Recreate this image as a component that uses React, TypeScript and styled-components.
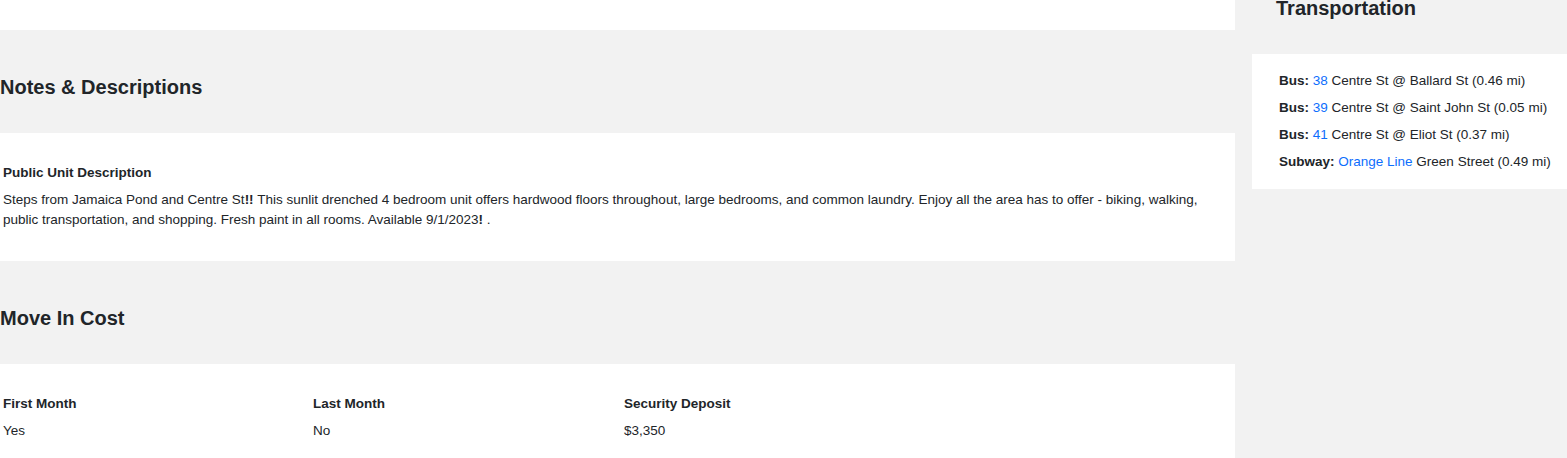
import React from "react";
import styled, { createGlobalStyle } from "styled-components";

const GlobalStyle = createGlobalStyle`
  html, body {
    margin: 0;
    padding: 0;
    background: #f2f2f2;
    overflow: hidden;
  }
  body {
    font-family: "Liberation Sans", Arial, sans-serif;
    color: #212529;
  }
  * { box-sizing: border-box; }
`;

const Page = styled.div`
  display: flex;
  align-items: flex-start;
  margin-top: -49px;
  width: 1567px;
`;

const MainColumn = styled.div`
  width: 1235px;
  flex: none;
  display: flex;
  flex-direction: column;
`;

const SideColumn = styled.div`
  flex: 1;
  display: flex;
  flex-direction: column;
  padding-left: 17px;
`;

const Card = styled.div<{ $pad?: string; $height?: number }>`
  background: #ffffff;
  padding: ${(p) => p.$pad ?? "30px 3px 32px"};
  ${(p) => (p.$height ? `height: ${p.$height}px;` : "")}
`;

const SectionTitle = styled.h2<{ $indent?: number }>`
  margin: 0;
  padding: 45px 0 34px ${(p) => p.$indent ?? 0}px;
  font-size: 20px;
  line-height: 24px;
  font-weight: 700;
  color: #212529;
`;

const Label = styled.div`
  font-size: 13.5px;
  line-height: 20px;
  font-weight: 700;
`;

const Text = styled.p`
  margin: 7px 0 0;
  font-size: 13.5px;
  line-height: 20px;
`;

const Strong = styled.strong`
  font-weight: 700;
`;

const CostGrid = styled.div`
  display: grid;
  grid-template-columns: 310px 311px 310px 1fr;
`;

const TransportList = styled.ul`
  list-style: none;
  margin: 0;
  padding: 0;
  display: flex;
  flex-direction: column;
  gap: 7px;
`;

const TransportItem = styled.li`
  font-size: 13.5px;
  line-height: 20px;
  white-space: nowrap;
`;

const Mode = styled.b`
  font-weight: 700;
`;

const Link = styled.a`
  color: #0d6efd;
  text-decoration: none;
`;

const transport = [
  { mode: "Bus", line: "38", stop: "Centre St @ Ballard St (0.46 mi)" },
  { mode: "Bus", line: "39", stop: "Centre St @ Saint John St (0.05 mi)" },
  { mode: "Bus", line: "41", stop: "Centre St @ Eliot St (0.37 mi)" },
  { mode: "Subway", line: "Orange Line", stop: "Green Street (0.49 mi)" },
];

const costs = [
  { label: "First Month", value: "Yes" },
  { label: "Last Month", value: "No" },
  { label: "Security Deposit", value: "$3,350" },
];

export default function App() {
  return (
    <>
      <GlobalStyle />
      <Page>
        <MainColumn>
          <Card $pad="0" $height={79} />
          <SectionTitle>Notes &amp; Descriptions</SectionTitle>
          <Card $pad="30px 3px 31px">
            <Label>Public Unit Description</Label>
            <Text>
              Steps from Jamaica Pond and Centre St<Strong>!!</Strong> This sunlit drenched 4 bedroom unit
              offers hardwood floors throughout, large bedrooms, and common laundry. Enjoy all the area has
              to offer - biking, walking, public transportation, and shopping. Fresh paint in all rooms.
              Available 9/1/2023<Strong>!</Strong> .
            </Text>
          </Card>
          <SectionTitle>Move In Cost</SectionTitle>
          <Card $pad="30px 3px 40px">
            <CostGrid>
              {costs.map((c) => (
                <div key={c.label}>
                  <Label>{c.label}</Label>
                  <Text>{c.value}</Text>
                </div>
              ))}
            </CostGrid>
          </Card>
        </MainColumn>
        <SideColumn>
          <SectionTitle $indent={24}>Transportation</SectionTitle>
          <Card $pad="17px 27px 17px">
            <TransportList>
              {transport.map((t, i) => (
                <TransportItem key={i}>
                  <Mode>{t.mode}:</Mode> <Link href="#">{t.line}</Link> {t.stop}
                </TransportItem>
              ))}
            </TransportList>
          </Card>
        </SideColumn>
      </Page>
    </>
  );
}
